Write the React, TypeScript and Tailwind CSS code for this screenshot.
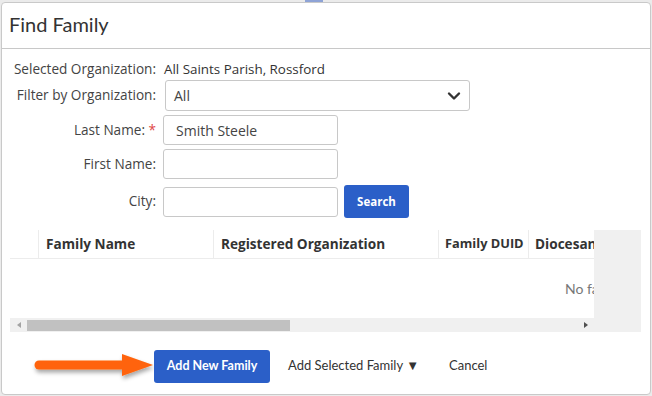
import React from "react";

const lato = { fontFamily: "Lato, 'Open Sans', Arial, sans-serif" };
const open = { fontFamily: "'Open Sans', 'Noto Sans', Arial, sans-serif" };

function Arrow() {
  return (
    <svg width="124" height="40" viewBox="0 0 124 40" className="shrink-0">
      <defs>
        <filter id="sh" x="-20%" y="-50%" width="140%" height="200%">
          <feDropShadow dx="1" dy="3" stdDeviation="2" floodColor="#000" floodOpacity="0.35" />
        </filter>
      </defs>
      <g filter="url(#sh)">
        <line x1="9" y1="19" x2="96" y2="19" stroke="#ff640a" strokeWidth="9" strokeLinecap="round" />
        <polygon points="92,8 123,19 92,30" fill="#ff640a" />
      </g>
    </svg>
  );
}

export default function App() {
  return (
    <div className="w-[652px] h-[396px] bg-[#ebebeb] pt-[2px] px-[1px] overflow-hidden relative" style={open}>
      <div className="absolute left-[305px] top-0 w-[18px] h-[2px] bg-[#8ea3d6]" />
      <div className="h-[393px] bg-white border border-[#c9c9c9] rounded-[4px] flex flex-col text-[#333]">
        <div className="h-[46px] border-b border-[#c8c8c8] pl-[7px] pb-[3px] flex items-center" style={lato}>
          <span className="text-[20px] text-[#333] leading-none">Find Family</span>
        </div>
        <div className="px-[8px] pt-[11px] flex flex-col">
          <div className="flex items-center h-[18px] text-[13.6px]">
            <div className="w-[146px] text-right text-[#444] whitespace-nowrap">Selected Organization:</div>
            <div className="ml-[8px] text-[#333] whitespace-nowrap text-[13.4px]">All Saints Parish, Rossford</div>
          </div>
          <div className="flex items-center mt-[2px] text-[13.6px]">
            <div className="w-[146px] text-right text-[#444] whitespace-nowrap">Filter by Organization:</div>
            <div className="ml-[9px] w-[305px] h-[31px] border border-[#c8c8c8] rounded-[3px] flex items-center justify-between pl-[8px] pr-[8px]">
              <span className="text-[#444] text-[14px]">All</span>
              <svg width="14" height="10" viewBox="0 0 14 10">
                <path d="M2 2.5 L7 7.5 L12 2.5" fill="none" stroke="#333" strokeWidth="2.4" strokeLinecap="round" strokeLinejoin="round" />
              </svg>
            </div>
          </div>
          <div className="flex items-center mt-[4px] text-[13.6px]">
            <div className="w-[146px] text-right text-[#444] whitespace-nowrap">
              Last Name: <span className="text-[#e04545]">*</span>
            </div>
            <div className="ml-[7px] w-[175px] h-[30px] border border-[#c8c8c8] rounded-[3px] flex items-center pl-[12px] text-[#444] text-[14px]">
              Smith Steele
            </div>
          </div>
          <div className="flex items-center mt-[4px] text-[13.6px]">
            <div className="w-[146px] text-right text-[#444]">First Name:</div>
            <div className="ml-[7px] w-[175px] h-[30px] border border-[#c8c8c8] rounded-[3px]" />
          </div>
          <div className="flex items-center mt-[6px] text-[13.6px]">
            <div className="w-[146px] text-right text-[#444]">City:</div>
            <div className="ml-[7px] w-[175px] h-[30px] border border-[#c8c8c8] rounded-[3px]" />
            <div className="ml-[6px] w-[65px] h-[33px] rounded-[3px] bg-[#2b5fc8] text-white font-bold text-[11.5px] flex items-center justify-center">
              Search
            </div>
          </div>
          <div className="mt-[12px] flex h-[102px]">
            <div className="w-[584px] flex flex-col overflow-hidden">
              <div className="flex h-[29px] border-b border-[#ececec] text-[13.6px] font-bold text-[#333] whitespace-nowrap">
                <div className="w-[29px] shrink-0 border-r border-[#ececec]" />
                <div className="w-[175px] shrink-0 border-r border-[#ececec] pl-[7px] flex items-center">Family Name</div>
                <div className="w-[225px] shrink-0 border-r border-[#ececec] pl-[7px] flex items-center">Registered Organization</div>
                <div className="w-[90px] shrink-0 border-r border-[#ececec] pl-[6px] flex items-center overflow-hidden text-[12.8px]">Family DUID</div>
                <div className="w-[120px] shrink-0 pl-[6px] flex items-center">Diocesan ID</div>
              </div>
              <div className="flex-1 whitespace-nowrap overflow-hidden">
                <div className="pl-[555px] pt-[19px] text-[14px] text-[#777]" style={lato}>No families found</div>
              </div>
              <div className="h-[14px] bg-[#f0f0f0] flex items-center">
                <div className="w-[17px] flex justify-center">
                  <svg width="4" height="6" viewBox="0 0 4 6"><polygon points="4,0 0,3 4,6" fill="#a3a3a3" /></svg>
                </div>
                <div className="w-[263px] h-[11px] bg-[#c1c1c1]" />
                <div className="flex-1" />
                <div className="w-[17px] flex justify-center">
                  <svg width="4" height="6" viewBox="0 0 4 6"><polygon points="0,0 4,3 0,6" fill="#505050" /></svg>
                </div>
              </div>
            </div>
            <div className="w-[47px] bg-[#f0f0f0]" />
          </div>
        </div>
        <div className="flex items-center mt-[14px] pl-[28px]" style={lato}>
          <Arrow />
          <div className="ml-[0px] w-[116px] h-[33px] rounded-[3px] bg-[#2b5fc8] text-white font-bold text-[12.5px] flex items-center justify-center">
            Add New Family
          </div>
          <div className="ml-[18px] text-[13px] text-[#333]">Add Selected Family ▼</div>
          <div className="ml-[30px] text-[13px] text-[#333]">Cancel</div>
        </div>
      </div>
    </div>
  );
}
